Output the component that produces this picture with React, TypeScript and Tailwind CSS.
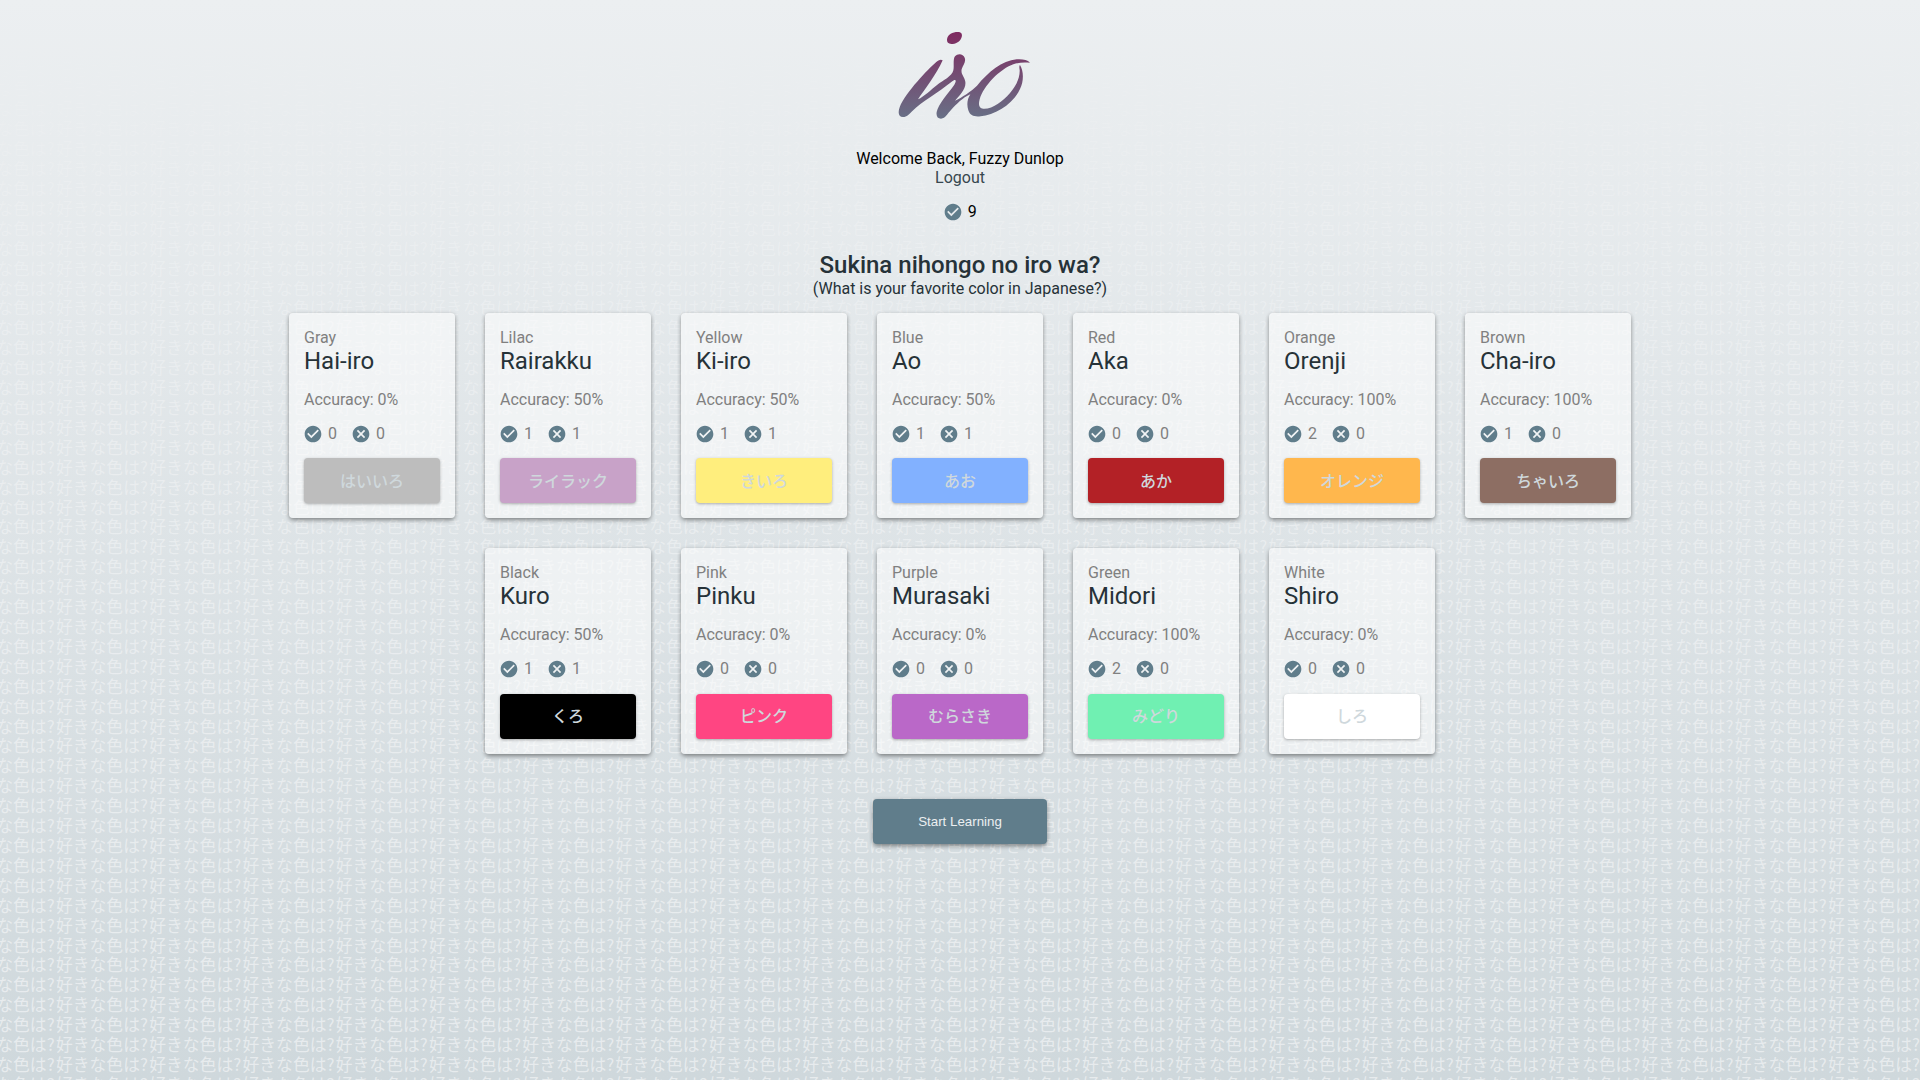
import React from "react";

type Color = { en: string; jp: string; acc: number; ok: number; bad: number; kana: string; bg: string };

const firstRow: Color[] = [
  { en: "Gray", jp: "Hai-iro", acc: 0, ok: 0, bad: 0, kana: "はいいろ", bg: "bg-[#bdbdbd]" },
  { en: "Lilac", jp: "Rairakku", acc: 50, ok: 1, bad: 1, kana: "ライラック", bg: "bg-[#c8a2c8]" },
  { en: "Yellow", jp: "Ki-iro", acc: 50, ok: 1, bad: 1, kana: "きいろ", bg: "bg-[#ffee7d]" },
  { en: "Blue", jp: "Ao", acc: 50, ok: 1, bad: 1, kana: "あお", bg: "bg-[#82b1ff]" },
  { en: "Red", jp: "Aka", acc: 0, ok: 0, bad: 0, kana: "あか", bg: "bg-[#b32126]" },
  { en: "Orange", jp: "Orenji", acc: 100, ok: 2, bad: 0, kana: "オレンジ", bg: "bg-[#ffb74d]" },
  { en: "Brown", jp: "Cha-iro", acc: 100, ok: 1, bad: 0, kana: "ちゃいろ", bg: "bg-[#8d6e63]" },
];

const secondRow: Color[] = [
  { en: "Black", jp: "Kuro", acc: 50, ok: 1, bad: 1, kana: "くろ", bg: "bg-black" },
  { en: "Pink", jp: "Pinku", acc: 0, ok: 0, bad: 0, kana: "ピンク", bg: "bg-[#ff4582]" },
  { en: "Purple", jp: "Murasaki", acc: 0, ok: 0, bad: 0, kana: "むらさき", bg: "bg-[#ba68c8]" },
  { en: "Green", jp: "Midori", acc: 100, ok: 2, bad: 0, kana: "みどり", bg: "bg-[#70f0b2]" },
  { en: "White", jp: "Shiro", acc: 0, ok: 0, bad: 0, kana: "しろ", bg: "bg-white" },
];

function Check() {
  return (
    <svg viewBox="0 0 24 24" className="size-5 fill-[#607d8b]">
      <path d="M12 2C6.48 2 2 6.48 2 12s4.48 10 10 10 10-4.48 10-10S17.52 2 12 2zm-2 15l-5-5 1.41-1.41L10 14.17l7.59-7.59L19 8l-9 9z" />
    </svg>
  );
}

function Cross() {
  return (
    <svg viewBox="0 0 24 24" className="size-5 fill-[#607d8b]">
      <path d="M12 2C6.47 2 2 6.47 2 12s4.47 10 10 10 10-4.47 10-10S17.53 2 12 2zm5 13.59L15.59 17 12 13.41 8.41 17 7 15.59 10.59 12 7 8.41 8.41 7 12 10.59 15.59 7 17 8.41 13.41 12 17 15.59z" />
    </svg>
  );
}

function Card({ c }: { c: Color }) {
  return (
    <div className="flex h-[205.4px] w-[166px] flex-col rounded bg-white/50 px-[15px] pt-[15px] shadow-[0_3px_5px_-1px_rgba(0,0,0,0.3),0_1px_4px_rgba(0,0,0,0.22)]">
      <div className="h-[19px] leading-[19px] text-[#808080]">{c.en}</div>
      <div className="h-7 text-2xl leading-7 text-[#263238]">{c.jp}</div>
      <div className="mt-[15px] leading-[19px] text-[#808080]">Accuracy: {c.acc}%</div>
      <div className="-ml-[0.6px] mt-[15px] flex h-5 shrink-0 items-center leading-5 text-[#808080]">
        <Check />
        <span className="ml-[4.6px] w-[23.4px]">{c.ok}</span>
        <Cross />
        <span className="ml-[4.6px]">{c.bad}</span>
      </div>
      <div
        className={`mt-[14.4px] flex h-[45px] w-[136px] shrink-0 items-center justify-center rounded pt-0.5 font-medium text-[#cfd8dc] shadow-[0_1px_3px_rgba(0,0,0,0.3)] ${c.bg}`}
      >
        {c.kana}
      </div>
    </div>
  );
}

const rows = Array.from({ length: 55 }, (_, i) => i);
const columns = Array.from({ length: 22 }, (_, i) => i - 1);

function Backdrop() {
  return (
    <svg className="absolute inset-0 -z-10 size-full opacity-85" aria-hidden="true">
      <defs>
        <g id="line" fontFamily="'Noto Sans CJK JP', sans-serif" fontSize="16.8" fill="#eceff1">
          {columns.map((i) => (
            <text key={i} x={56 + i * 93.27} y="0">
              好きな色は?
            </text>
          ))}
        </g>
      </defs>
      {rows.map((r) => (
        <use key={r} href="#line" y={15.8 + r * 19.91} />
      ))}
    </svg>
  );
}

function Logo() {
  return (
    <svg width="200" height="130" viewBox="0 0 600 390" className="mt-[10px]">
      <defs>
        <linearGradient id="ink" gradientUnits="userSpaceOnUse" x1="0" y1="66" x2="0" y2="326">
          <stop offset="0" stopColor="#7f2a60" />
          <stop offset="1" stopColor="#687086" />
        </linearGradient>
      </defs>
      <g fill="url(#ink)">
        <path d="M261 88C263 73 278 66 293 66C306 66 308 74 304 84C299 96 286 102 274 102C265 102 260 97 261 88Z" />
        <path d="M248 151C242 147 235 151 228 157C205 177 137 247 119 292C113 308 116 321 129 321C141 321 147 313 158 302C183 276 237 246 275 215C287 206 291 210 283 224C262 254 235 281 230 306C228 319 233 326 243 326C257 325 262 311 273 300C291 281 307 264 331 253C321 268 320 286 325 301C330 318 344 321 362 319C405 315 461 281 480 237C492 214 491 182 480 165C477 168 478 173 479 180C481 218 448 258 414 281C391 297 358 305 357 283C357 246 402 193 446 169C468 157 490 156 510 158C502 149 487 147 470 148C426 152 385 186 351 227C335 243 305 263 285 272C299 255 319 237 316 215C313 199 302 193 305 178C309 165 319 156 314 143C310 131 293 129 285 139C278 149 283 167 280 181C276 199 249 212 232 224C212 240 193 259 174 268C194 238 230 193 248 151Z" />
      </g>
    </svg>
  );
}

export default function App() {
  return (
    <div className="relative isolate flex h-[1080px] w-full flex-col items-center overflow-hidden bg-linear-to-b from-[#eceff1] to-[#cfd8dc] font-[Roboto,'Noto_Sans_CJK_JP',sans-serif] text-base text-black">
      <Backdrop />
      <Logo />
      <p className="mt-[9px] leading-[19px]">Welcome Back, Fuzzy Dunlop</p>
      <a className="leading-[19px] text-[#37474f]">Logout</a>
      <div className="mt-[15px] flex h-5 items-center gap-[4.5px] leading-5">
        <Check />
        <span>9</span>
      </div>
      <h1 className="mt-[29px] text-2xl font-medium leading-7 text-[#263238]">Sukina nihongo no iro wa?</h1>
      <p className="leading-[19px] text-[#263238]">(What is your favorite color in Japanese?)</p>
      <div className="mt-[15px] flex gap-[30px]">
        {firstRow.map((c) => (
          <Card key={c.en} c={c} />
        ))}
      </div>
      <div className="mt-[30px] flex gap-[30px]">
        {secondRow.map((c) => (
          <Card key={c.en} c={c} />
        ))}
      </div>
      <button className="mt-[45.2px] h-[45px] w-[174px] rounded bg-[#607d8b] pt-px font-['Liberation_Sans',sans-serif] text-[13.333px] text-[#eceff1] shadow-[0_3px_5px_-1px_rgba(0,0,0,0.3),0_1px_4px_rgba(0,0,0,0.22)]">
        Start Learning
      </button>
    </div>
  );
}
